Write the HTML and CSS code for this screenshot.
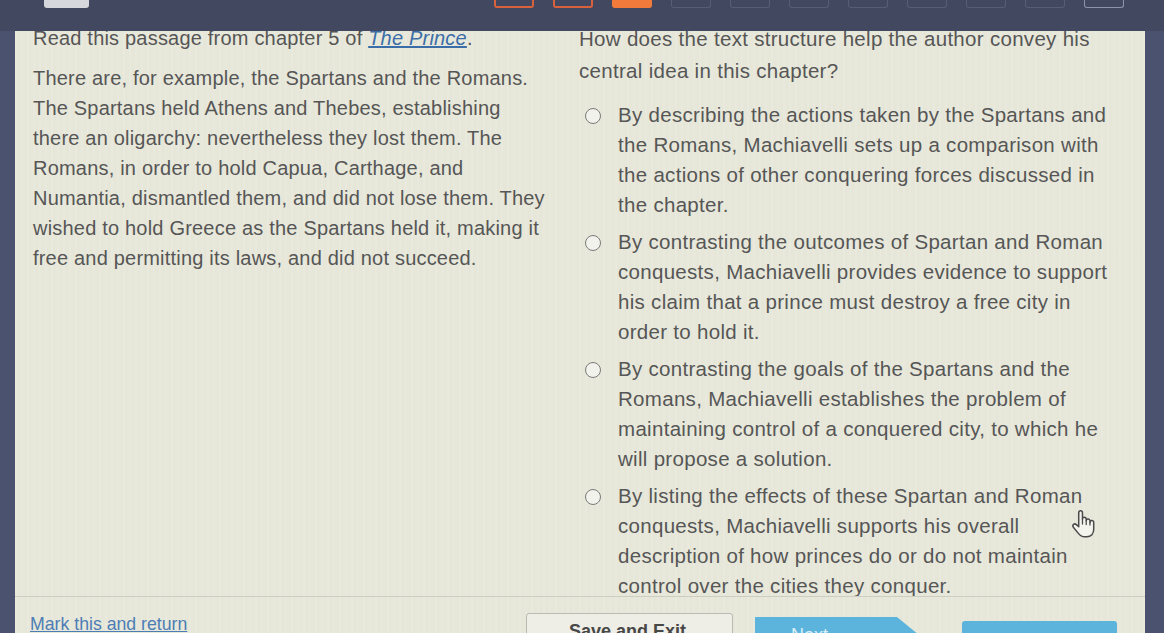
FILE: index.html
```html
<!DOCTYPE html>
<html lang="en">
<head>
<meta charset="utf-8">
<title>The Prince – Question</title>
<link rel="stylesheet" href="styles.css">
</head>
<body>
<div class="topbar">
  <div class="tool-btn"></div>
  <div class="tabs">
    <span class="tab tab-done"></span>
    <span class="tab tab-done"></span>
    <span class="tab tab-current"></span>
    <span class="tab"></span>
    <span class="tab"></span>
    <span class="tab"></span>
    <span class="tab"></span>
    <span class="tab"></span>
    <span class="tab"></span>
    <span class="tab"></span>
    <span class="tab tab-last"></span>
  </div>
</div>
<div class="frame">
  <div class="panel">
    <div class="scroll">
      <div class="passage">
        <p class="intro">Read this passage from chapter 5 of <a class="book" href="#">The Prince</a>.</p>
        <p class="quote">There are, for example, the Spartans and the Romans.<br>The Spartans held Athens and Thebes, establishing<br>there an oligarchy: nevertheless they lost them. The<br>Romans, in order to hold Capua, Carthage, and<br>Numantia, dismantled them, and did not lose them. They<br>wished to hold Greece as the Spartans held it, making it<br>free and permitting its laws, and did not succeed.</p>
      </div>
      <div class="question">
        <p class="prompt">How does the text structure help the author convey his<br>central idea in this chapter?</p>
        <label class="option"><span class="radio"></span><span class="option-text">By describing the actions taken by the Spartans and<br>the Romans, Machiavelli sets up a comparison with<br>the actions of other conquering forces discussed in<br>the chapter.</span></label>
        <label class="option"><span class="radio"></span><span class="option-text">By contrasting the outcomes of Spartan and Roman<br>conquests, Machiavelli provides evidence to support<br>his claim that a prince must destroy a free city in<br>order to hold it.</span></label>
        <label class="option"><span class="radio"></span><span class="option-text">By contrasting the goals of the Spartans and the<br>Romans, Machiavelli establishes the problem of<br>maintaining control of a conquered city, to which he<br>will propose a solution.</span></label>
        <label class="option"><span class="radio"></span><span class="option-text">By listing the effects of these Spartan and Roman<br>conquests, Machiavelli supports his overall<br>description of how princes do or do not maintain<br>control over the cities they conquer.</span></label>
      </div>
    </div>
    <div class="footer">
      <a class="mark-link" href="#">Mark this and return</a>
      <button class="btn btn-save">Save and Exit</button>
      <button class="btn btn-next">Next</button>
      <button class="btn btn-submit">Submit</button>
    </div>
  </div>
</div>
<svg class="cursor" viewBox="0 0 24 28" width="26" height="30" aria-hidden="true">
  <path d="M8 16.5 V3.5 A1.75 1.75 0 0 1 11.5 3.5 V9.5 A1.75 1.75 0 0 1 15 9.5 V11 A1.75 1.75 0 0 1 18.5 11 V12.5 A1.75 1.75 0 0 1 22 12.5 V19 C22 23 19.5 26 15.5 26 H13.5 C10.5 26 9 24.5 7.5 22.5 L3 17 A1.8 1.8 0 0 1 5.8 14.6 Z" fill="#f4f4ee" stroke="#4a4a4a" stroke-width="1.4" stroke-linejoin="round"/>
  <path d="M11.5 9.5 V14 M15 11 V14.5 M18.5 12.5 V15" fill="none" stroke="#4a4a4a" stroke-width="1.2" stroke-linecap="round"/>
</svg>
</body>
</html>
```
FILE: styles.css
```css
* { box-sizing: border-box; }

html, body {
  margin: 0;
  height: 100%;
}

body {
  background: #4a5270;
  font-family: "Liberation Sans", Arial, sans-serif;
  color: #565656;
  overflow: hidden;
  position: relative;
}

.topbar {
  height: 31px;
  background: #41485f;
  display: flex;
  align-items: flex-start;
}

.tool-btn {
  margin-left: 44px;
  width: 45px;
  height: 8px;
  background: #d6d7dc;
  border-radius: 0 0 3px 3px;
}

.tabs {
  margin-left: 405px;
  display: flex;
  gap: 19px;
}

.tab {
  width: 40px;
  height: 8px;
  border: 1px solid #565d75;
  border-top: none;
  border-radius: 0 0 3px 3px;
}

.tab-done {
  border: 2px solid #d9623c;
  border-top: none;
}

.tab-current {
  background: #f27b3b;
  border-color: #f27b3b;
}

.tab-last {
  border-color: #8d93aa;
}

.frame {
  height: 602px;
  display: flex;
  padding: 0 19px 0 15px;
}

.panel {
  flex: 1;
  display: flex;
  flex-direction: column;
  overflow: hidden;
  background-color: #e6e7d9;
  background-image: repeating-linear-gradient(90deg, rgba(255,255,255,0.10) 0 2px, rgba(0,0,0,0) 2px 6px);
}

.scroll {
  flex: none;
  height: 566px;
  display: flex;
  padding-left: 18px;
  border-bottom: 1px solid #cdcec2;
  overflow: hidden;
}

.passage {
  width: 546px;
  margin-top: -8px;
  font-size: 20px;
  letter-spacing: 0.2px;
}

.passage p,
.question p {
  margin: 0;
}

.intro {
  line-height: 30px;
  margin-bottom: 10px !important;
}

.book {
  color: #3b6ea8;
  font-style: italic;
  text-decoration: underline;
}

.quote {
  line-height: 30px;
}

.question {
  width: 560px;
  margin-top: -8px;
  font-size: 20.5px;
  letter-spacing: 0.3px;
}

.prompt {
  line-height: 32px;
  margin-bottom: 13px !important;
}

.option {
  display: flex;
  align-items: flex-start;
  line-height: 30px;
  margin-bottom: 7px;
}

.radio {
  flex: none;
  width: 16px;
  height: 16px;
  margin: 8px 17px 0 6px;
  border: 1.5px solid #7a7a7a;
  border-radius: 50%;
  background: #f2f2ec;
}

.footer {
  flex: 1;
  display: flex;
  align-items: flex-start;
  padding: 16px 0 0 15px;
}

.mark-link {
  width: 496px;
  margin-top: 1px;
  font-size: 17.7px;
  color: #4d7db5;
  text-decoration: underline;
}

.btn {
  font-family: "Liberation Sans", Arial, sans-serif;
  height: 36px;
  border: none;
  padding: 0;
  text-align: left;
}

.btn-save {
  width: 207px;
  background: #eeeee6;
  border: 1px solid #b9bab1;
  border-radius: 3px;
  padding: 1px 0 0 42px;
  font-size: 18px;
  font-weight: bold;
  color: #474747;
}

.btn-next {
  width: 164px;
  margin-left: 22px;
  margin-top: 4px;
  background: #5cb4dd;
  clip-path: polygon(0 0, calc(100% - 22px) 0, 100% 50%, calc(100% - 22px) 100%, 0 100%);
  padding: 1px 0 0 36px;
  font-size: 18px;
  color: #d9eef8;
}

.btn-submit {
  width: 155px;
  margin-left: 43px;
  margin-top: 8px;
  background: #5cb4dd;
  border-radius: 3px;
  padding: 3px 0 0 56px;
  font-size: 18px;
  color: #d9eef8;
}

.cursor {
  position: absolute;
  left: 1070px;
  top: 509px;
}
```
